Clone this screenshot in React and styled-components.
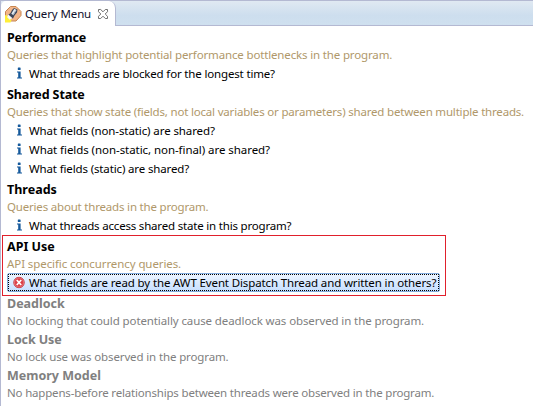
import React from "react";
import styled, { createGlobalStyle } from "styled-components";

const GlobalStyle = createGlobalStyle`
  body { margin: 0; background: #fff; overflow: hidden; }
`;

const Panel = styled.div`
  box-sizing: border-box;
  width: 533px;
  height: 406px;
  border-left: 1px solid #b4b9d2;
  background: #fff;
  font: 11.5px/18px "Noto Sans", "Open Sans", sans-serif;
  color: #000;
  white-space: nowrap;
  overflow: hidden;
`;

const TabBar = styled.div`
  display: flex;
  height: 26px;
  box-sizing: border-box;
  border-top: 1px solid #b4b9d2;
  border-bottom: 1px solid #b4b9d2;
  background: linear-gradient(#e0e9f2, #cddeee 60%, #cfe0ef);
`;

const Tab = styled.div`
  display: flex;
  align-items: center;
  box-sizing: border-box;
  width: 115px;
  height: 25px;
  padding: 0 0 0 3px;
  border-right: 1px solid #b4b9d2;
  border-radius: 5px 7px 0 0;
  background: #fff;
  color: #10102c;
`;

const TabIcon = styled.svg`
  width: 18px;
  height: 18px;
  margin-right: 3px;
`;

const CloseIcon = styled.svg`
  width: 12px;
  height: 12px;
  margin-left: auto;
  margin-right: 6px;
`;

const Sections = styled.div`
  padding: 2px 0 0 6px;
`;

const Section = styled.section`
  position: relative;
  padding-bottom: ${(p) => (p.$empty ? 0 : 2)}px;
`;

const Text = styled.span`
  letter-spacing: ${(p) => p.$track || 0}px;
`;

const Heading = styled.h2`
  box-sizing: border-box;
  height: 18px;
  margin: 0;
  padding-top: 1px;
  font-size: 12.5px;
  line-height: 18px;
  font-weight: 700;
  color: ${(p) => (p.$empty ? "#808080" : "#000")};
`;

const Description = styled.p`
  height: 18px;
  margin: 0;
  color: ${(p) => (p.$empty ? "#808080" : "#b0986a")};
`;

const QueryIcon = styled.svg`
  flex: none;
  width: 16px;
  height: 16px;
  margin-right: 2px;
`;

const Query = styled.div`
  display: flex;
  align-items: center;
  height: 19px;
  padding-left: 4px;
`;

const SelectedQuery = styled(Query)`
  box-sizing: border-box;
  width: 433px;
  padding-left: 3px;
  border: 1px solid #84acdd;
  border-radius: 2px;
  background: linear-gradient(#edf5ff, #c7dfff);
  outline: 1px dotted #000;
  outline-offset: -2px;
`;

const Highlight = styled.div`
  position: absolute;
  left: -5px;
  top: -2px;
  box-sizing: border-box;
  width: 444px;
  height: 61px;
  border: 1px solid #e0202c;
  pointer-events: none;
`;

const sections = [
  {
    title: ["Performance", -0.15],
    text: ["Queries that highlight potential performance bottlenecks in the program.", -0.15],
    queries: [["What threads are blocked for the longest time?", -0.16]],
  },
  {
    title: ["Shared State", -0.12],
    text: ["Queries that show state (fields, not local variables or parameters) shared between multiple threads.", -0.188],
    queries: [
      ["What fields (non-static) are shared?", -0.1],
      ["What fields (non-static, non-final) are shared?", -0.06],
      ["What fields (static) are shared?", -0.14],
    ],
  },
  {
    title: ["Threads", 0],
    text: ["Queries about threads in the program.", -0.19],
    queries: [["What threads access shared state in this program?", -0.19]],
  },
  {
    title: ["API Use", 0],
    text: ["API specific concurrency queries.", -0.09],
    selected: true,
    queries: [["What fields are read by the AWT Event Dispatch Thread and written in others?", -0.13]],
  },
  {
    title: ["Deadlock", 0],
    text: ["No locking that could potentially cause deadlock was observed in the program.", -0.105],
    queries: [],
  },
  {
    title: ["Lock Use", -0.1],
    text: ["No lock use was observed in the program.", -0.13],
    queries: [],
  },
  {
    title: ["Memory Model", 0],
    text: ["No happens-before relationships between threads were observed in the program.", -0.185],
    queries: [],
  },
];

const Label = ({ value }) => <Text $track={value[1]}>{value[0]}</Text>;

const Info = () => (
  <QueryIcon viewBox="0 0 16 16" fill="#15599b">
    <rect x="6.8" y="1.5" width="2.8" height="2.5" rx=".6" />
    <path d="M6 5.5h3.6v6H11v1H6v-1h1.2v-5H6z" />
  </QueryIcon>
);

const ErrorMark = () => (
  <QueryIcon viewBox="0 0 16 16">
    <circle cx="8" cy="7.5" r="5.2" fill="#dc3f48" stroke="#c4303c" />
    <circle cx="8" cy="7.5" r="4.6" fill="none" stroke="#ee8f8f" strokeWidth=".7" />
    <path d="M5.8 5l4.4 5M10.2 5l-4.4 5" stroke="#fff" strokeWidth="1.7" />
  </QueryIcon>
);

const Flashlight = () => (
  <TabIcon viewBox="0 0 18 18">
    <path d="M6.5 1.5h5.5l5 5v4l-5 5.5H6.5l-5-5.5v-4z" fill="#f2b58a" stroke="#c88650" />
    <path d="M1 10.5l1.5-.5 5 5-1 2.5H1z" fill="#ffef38" />
    <path d="M10 3l3.5 1.5-.5 3-2.5 3-1.5 3-4-1.5-1-2 2.5-2 1.5-3z" fill="#3d4659" />
    <path d="M10.3 3.8L12.5 5l-3 5.2-2.2-1.4z" fill="#e4ecf2" />
    <path d="M4.3 9.5l4 3.6-2.6 1.7-2.6-2.6z" fill="#f4f7fa" />
    <path d="M11.8 5.5L9 10" stroke="#8b9cb0" strokeWidth=".8" />
  </TabIcon>
);

const Close = () => (
  <CloseIcon viewBox="0 0 12 12">
    <path
      d="M1.5 1.5h2.2L6 3.8l2.3-2.3h2.2v2.2L8.2 6l2.3 2.3v2.2H8.3L6 8.2l-2.3 2.3H1.5V8.3L3.8 6 1.5 3.7z"
      fill="#fff"
      stroke="#707070"
    />
  </CloseIcon>
);

export default function App() {
  return (
    <Panel>
      <GlobalStyle />
      <TabBar>
        <Tab>
          <Flashlight />
          <Text $track={-0.12}>Query Menu</Text>
          <Close />
        </Tab>
      </TabBar>
      <Sections>
        {sections.map((s) => {
          const empty = s.queries.length === 0;
          const Row = s.selected ? SelectedQuery : Query;
          return (
            <Section key={s.title[0]} $empty={empty}>
              <Heading $empty={empty}><Label value={s.title} /></Heading>
              <Description $empty={empty}><Label value={s.text} /></Description>
              {s.queries.map((q) => (
                <Row key={q[0]}>
                  {s.selected ? <ErrorMark /> : <Info />}
                  <Label value={q} />
                </Row>
              ))}
              {s.selected && <Highlight />}
            </Section>
          );
        })}
      </Sections>
    </Panel>
  );
}
